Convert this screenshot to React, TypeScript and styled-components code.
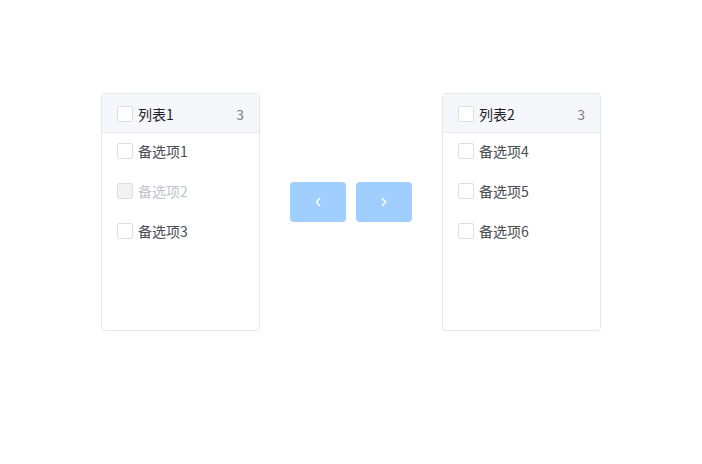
import React from "react";
import styled, { createGlobalStyle } from "styled-components";

const Global = createGlobalStyle`
  html, body { margin: 0; padding: 0; background: #fff; }
  body { font-family: "Noto Sans CJK SC", "Noto Sans", sans-serif; font-size: 14px; }
`;

const Page = styled.div`
  width: 702px;
  height: 464px;
  display: flex;
  justify-content: center;
  align-items: flex-start;
  padding-top: 93px;
  box-sizing: border-box;
`;

const Panel = styled.div`
  width: 159px;
  height: 238px;
  border: 1px solid #e4e7ed;
  border-radius: 4px;
  box-sizing: border-box;
  overflow: hidden;
  background: #fff;
  display: flex;
  flex-direction: column;
`;

const Header = styled.div`
  height: 37px;
  background: #f5f7fa;
  border-bottom: 1px solid #e4e7ed;
  display: flex;
  align-items: center;
  padding: 1px 15px 0 15px;
  box-sizing: content-box;
  flex-shrink: 0;
`;

const Box = styled.span<{ $disabled?: boolean }>`
  width: 16px;
  height: 16px;
  box-sizing: border-box;
  border: 1px solid #dcdfe6;
  border-radius: 2px;
  background: ${(p) => (p.$disabled ? "#f2f2f3" : "#fff")};
  flex-shrink: 0;
`;

const Title = styled.span`
  margin-left: 5px;
  color: #1f2329;
  flex: 1;
  line-height: 1;
`;

const Count = styled.span`
  color: #7a7f88;
  font-size: 14px;
  line-height: 1;
`;

const List = styled.div`
  display: flex;
  flex-direction: column;
`;

const Item = styled.div<{ $disabled?: boolean }>`
  height: 40px;
  box-sizing: border-box;
  padding: 0 0 4px 15px;
  display: flex;
  align-items: center;
  color: ${(p) => (p.$disabled ? "#c0c4cc" : "#4a4d53")};
`;

const ItemLabel = styled.span`
  margin-left: 5px;
  line-height: 1;
`;

const Buttons = styled.div`
  display: flex;
  gap: 10px;
  margin: 89px 30px 0;
`;

const Btn = styled.button`
  width: 56px;
  height: 40px;
  border: none;
  border-radius: 4px;
  background: #a0cfff;
  color: #fff;
  display: flex;
  align-items: center;
  justify-content: center;
  padding: 0;
  cursor: not-allowed;
`;

const Chevron = ({ dir }: { dir: "left" | "right" }) => (
  <svg width="8" height="10" viewBox="0 0 8 10" fill="none">
    <path
      d={dir === "left" ? "M5.5 1.5 L2.5 5 L5.5 8.5" : "M2.5 1.5 L5.5 5 L2.5 8.5"}
      stroke="#fff"
      strokeWidth="1.4"
      strokeLinecap="round"
      strokeLinejoin="round"
    />
  </svg>
);

type Opt = { label: string; disabled?: boolean };

const TransferPanel = ({ title, items }: { title: string; items: Opt[] }) => (
  <Panel>
    <Header>
      <Box />
      <Title>{title}</Title>
      <Count>{items.length}</Count>
    </Header>
    <List>
      {items.map((it) => (
        <Item key={it.label} $disabled={it.disabled}>
          <Box $disabled={it.disabled} />
          <ItemLabel>{it.label}</ItemLabel>
        </Item>
      ))}
    </List>
  </Panel>
);

export default function App() {
  return (
    <>
      <Global />
      <Page>
        <TransferPanel
          title="列表1"
          items={[{ label: "备选项1" }, { label: "备选项2", disabled: true }, { label: "备选项3" }]}
        />
        <Buttons>
          <Btn>
            <Chevron dir="left" />
          </Btn>
          <Btn>
            <Chevron dir="right" />
          </Btn>
        </Buttons>
        <TransferPanel
          title="列表2"
          items={[{ label: "备选项4" }, { label: "备选项5" }, { label: "备选项6" }]}
        />
      </Page>
    </>
  );
}
